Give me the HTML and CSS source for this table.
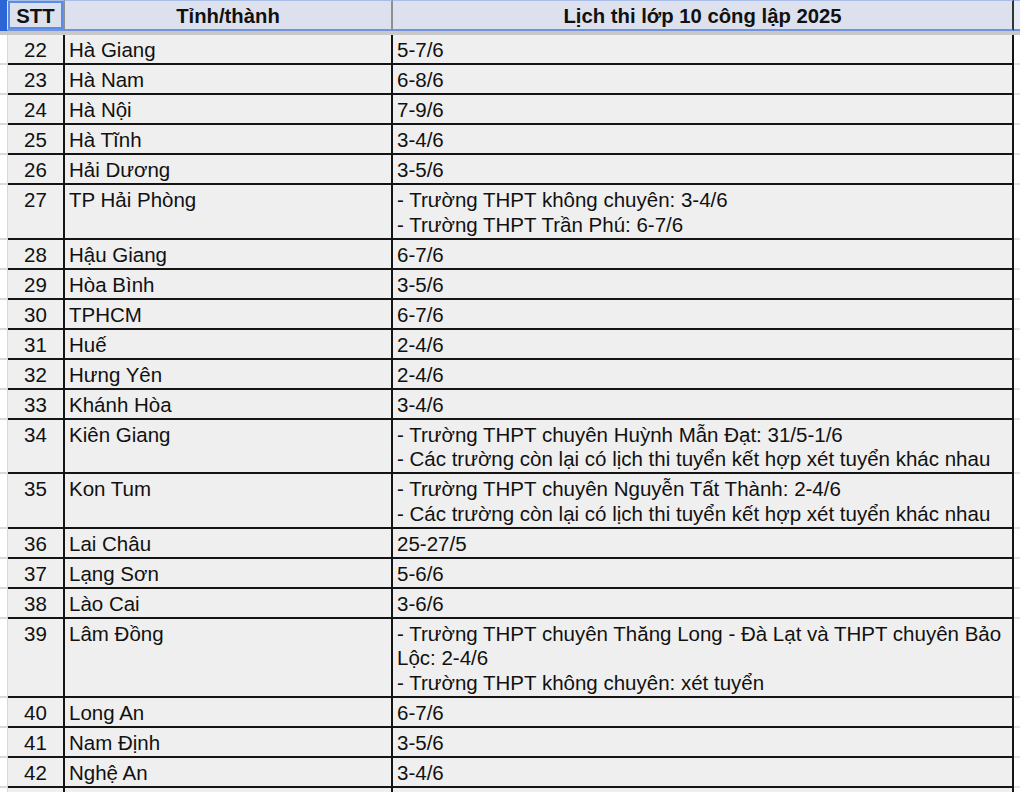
FILE: index.html
```html
<!DOCTYPE html>
<html lang="vi">
<head>
<meta charset="utf-8">
<title>Lịch thi lớp 10 công lập 2025</title>
<link rel="stylesheet" href="styles.css">
</head>
<body>
<table class="sheet">
  <colgroup>
    <col class="c-gut"><col class="c-stt"><col class="c-tinh"><col class="c-lich"><col class="c-end">
  </colgroup>
  <thead>
    <tr class="head">
      <th class="gut gut-sel"></th>
      <th class="stt sel">STT</th>
      <th class="tinh">Tỉnh/thành</th>
      <th class="lich">Lịch thi lớp 10 công lập 2025</th>
      <th class="end"></th>
    </tr>
    <tr class="band"><td colspan="5"></td></tr>
  </thead>
  <tbody>
    <tr><td class="gut"></td><td class="stt">22</td><td>Hà Giang</td><td>5-7/6</td><td class="end"></td></tr>
    <tr><td class="gut"></td><td class="stt">23</td><td>Hà Nam</td><td>6-8/6</td><td class="end"></td></tr>
    <tr><td class="gut"></td><td class="stt">24</td><td>Hà Nội</td><td>7-9/6</td><td class="end"></td></tr>
    <tr><td class="gut"></td><td class="stt">25</td><td>Hà Tĩnh</td><td>3-4/6</td><td class="end"></td></tr>
    <tr><td class="gut"></td><td class="stt">26</td><td>Hải Dương</td><td>3-5/6</td><td class="end"></td></tr>
    <tr><td class="gut"></td><td class="stt">27</td><td>TP Hải Phòng</td><td>- Trường THPT không chuyên: 3-4/6<br>- Trường THPT Trần Phú: 6-7/6</td><td class="end"></td></tr>
    <tr><td class="gut"></td><td class="stt">28</td><td>Hậu Giang</td><td>6-7/6</td><td class="end"></td></tr>
    <tr><td class="gut"></td><td class="stt">29</td><td>Hòa Bình</td><td>3-5/6</td><td class="end"></td></tr>
    <tr><td class="gut"></td><td class="stt">30</td><td>TPHCM</td><td>6-7/6</td><td class="end"></td></tr>
    <tr><td class="gut"></td><td class="stt">31</td><td>Huế</td><td>2-4/6</td><td class="end"></td></tr>
    <tr><td class="gut"></td><td class="stt">32</td><td>Hưng Yên</td><td>2-4/6</td><td class="end"></td></tr>
    <tr><td class="gut"></td><td class="stt">33</td><td>Khánh Hòa</td><td>3-4/6</td><td class="end"></td></tr>
    <tr><td class="gut"></td><td class="stt">34</td><td>Kiên Giang</td><td>- Trường THPT chuyên Huỳnh Mẫn Đạt: 31/5-1/6<br>- Các trường còn lại có lịch thi tuyển kết hợp xét tuyển khác nhau</td><td class="end"></td></tr>
    <tr><td class="gut"></td><td class="stt">35</td><td>Kon Tum</td><td>- Trường THPT chuyên Nguyễn Tất Thành: 2-4/6<br>- Các trường còn lại có lịch thi tuyển kết hợp xét tuyển khác nhau</td><td class="end"></td></tr>
    <tr><td class="gut"></td><td class="stt">36</td><td>Lai Châu</td><td>25-27/5</td><td class="end"></td></tr>
    <tr><td class="gut"></td><td class="stt">37</td><td>Lạng Sơn</td><td>5-6/6</td><td class="end"></td></tr>
    <tr><td class="gut"></td><td class="stt">38</td><td>Lào Cai</td><td>3-6/6</td><td class="end"></td></tr>
    <tr><td class="gut"></td><td class="stt">39</td><td>Lâm Đồng</td><td>- Trường THPT chuyên Thăng Long - Đà Lạt và THPT chuyên Bảo<br>Lộc: 2-4/6<br>- Trường THPT không chuyên: xét tuyển</td><td class="end"></td></tr>
    <tr><td class="gut"></td><td class="stt">40</td><td>Long An</td><td>6-7/6</td><td class="end"></td></tr>
    <tr><td class="gut"></td><td class="stt">41</td><td>Nam Định</td><td>3-5/6</td><td class="end"></td></tr>
    <tr><td class="gut"></td><td class="stt">42</td><td>Nghệ An</td><td>3-4/6</td><td class="end"></td></tr>
    <tr class="blank"><td class="gut"></td><td class="stt"></td><td></td><td></td><td class="end"></td></tr>
  </tbody>
</table>
</body>
</html>
```

FILE: styles.css
```css
html, body {
  margin: 0;
  padding: 0;
  background: #ffffff;
  overflow: hidden;
}

.sheet {
  border-collapse: separate;
  border-spacing: 0;
  table-layout: fixed;
  width: 1020px;
  font-family: "Liberation Sans", Arial, Helvetica, sans-serif;
  font-size: 20.5px;
  color: #111111;
}

.c-gut { width: 8px; }
.c-stt { width: 57px; }
.c-tinh { width: 328px; }
.c-lich { width: 621px; }
.c-end { width: 6px; }

.head th {
  box-sizing: border-box;
  height: 31px;
  padding: 2px 0 0;
  background: #dde1ee;
  border-top: 1px solid #a9bde9;
  border-bottom: 2px solid #6f93dd;
  border-right: 2px solid #8d8f96;
  font-weight: bold;
  font-size: 20.3px;
  text-align: center;
  vertical-align: middle;
  line-height: 26px;
  white-space: nowrap;
}

.head th.gut {
  background: #2c66d6;
  border-right: 1px solid #dfe4f2;
  border-top-color: #2c66d6;
  border-bottom-color: #2c66d6;
}

.head th.sel {
  box-shadow: inset 0 0 0 2px #5a8ce6;
}

.head th.lich {
  border-right: 2px solid #333333;
}

.head th.end {
  background: #e8ecf7;
  border-right: none;
}

.band td {
  height: 4px;
  padding: 0;
  background: #c8c8c8;
}

tbody td {
  background: #efefef;
  padding: 3px 4px 0.5px;
  line-height: 24.5px;
  vertical-align: top;
  border-right: 2px solid #141414;
  border-bottom: 2px solid #141414;
  white-space: nowrap;
  overflow: hidden;
}

tbody tr.blank td {
  height: 24.5px;
}

tbody td.stt {
  text-align: center;
  padding-left: 0;
  padding-right: 0;
}

tbody td.gut {
  background: #ffffff;
  padding: 0;
  border-right: 1px solid #d9d9d9;
  border-bottom: 2px solid #dadada;
}

tbody td.end {
  background: #ffffff;
  padding: 0;
  border-right: none;
  border-bottom: 2px solid #e2e2e2;
}
```
